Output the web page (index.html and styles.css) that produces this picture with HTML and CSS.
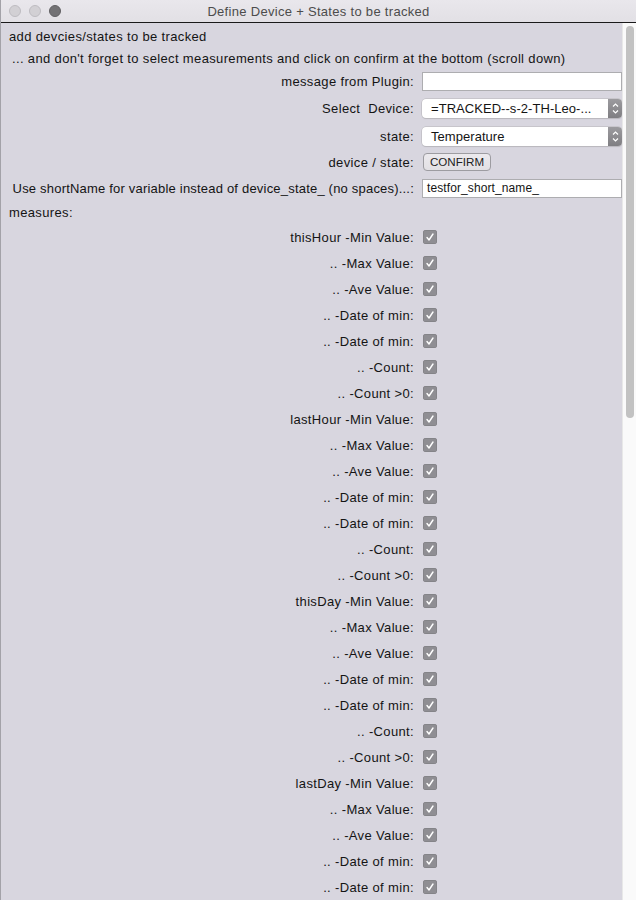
FILE: index.html
```html
<!DOCTYPE html>
<html>
<head>
<meta charset="utf-8">
<title>Define Device + States to be tracked</title>
<link rel="stylesheet" href="styles.css">
</head>
<body>
<div class="window">
  <div class="titlebar">
    <div class="lights">
      <span class="light"></span>
      <span class="light"></span>
      <span class="light dark"></span>
    </div>
    <div class="title">Define Device + States to be tracked</div>
  </div>
  <div class="body">
    <div class="content">
      <div class="text-row first">add devcies/states to be tracked</div>
      <div class="text-row indent">... and don't forget to select measurements and click on confirm at the bottom (scroll down)</div>

      <div class="field h-msg">
        <span class="label">message from Plugin:</span>
        <div class="textbox"></div>
      </div>
      <div class="field h-dev">
        <span class="label">Select&nbsp; Device:</span>
        <div class="popup"><span class="popup-text">=TRACKED--s-2-TH-Leo-...</span><span class="stepper"><svg width="13" height="19" viewBox="0 0 13 19"><path d="M4 7.5 L6.5 5 L9 7.5" fill="none" stroke="#fff" stroke-width="1.2"/><path d="M4 11.5 L6.5 14 L9 11.5" fill="none" stroke="#fff" stroke-width="1.2"/></svg></span></div>
      </div>
      <div class="field h-row">
        <span class="label">state:</span>
        <div class="popup"><span class="popup-text">Temperature</span><span class="stepper"><svg width="13" height="19" viewBox="0 0 13 19"><path d="M4 7.5 L6.5 5 L9 7.5" fill="none" stroke="#fff" stroke-width="1.2"/><path d="M4 11.5 L6.5 14 L9 11.5" fill="none" stroke="#fff" stroke-width="1.2"/></svg></span></div>
      </div>
      <div class="field h-row">
        <span class="label">device / state:</span>
        <div><span class="button">CONFIRM</span></div>
      </div>
      <div class="field h-row">
        <span class="label tight">Use shortName for variable instead of device_state_ (no spaces)...:</span>
        <div class="textbox">testfor_short_name_</div>
      </div>
      <div class="text-row measures">measures:</div>

      <div class="field h-check"><span class="label">thisHour -Min Value:</span><span class="check"><svg width="14" height="14" viewBox="0 0 14 14"><path d="M4 7.5 L6 10 L10 4" fill="none" stroke="#fff" stroke-width="1.4" stroke-linecap="round" stroke-linejoin="round"/></svg></span></div>
      <div class="field h-check"><span class="label">.. -Max Value:</span><span class="check"><svg width="14" height="14" viewBox="0 0 14 14"><path d="M4 7.5 L6 10 L10 4" fill="none" stroke="#fff" stroke-width="1.4" stroke-linecap="round" stroke-linejoin="round"/></svg></span></div>
      <div class="field h-check"><span class="label">.. -Ave Value:</span><span class="check"><svg width="14" height="14" viewBox="0 0 14 14"><path d="M4 7.5 L6 10 L10 4" fill="none" stroke="#fff" stroke-width="1.4" stroke-linecap="round" stroke-linejoin="round"/></svg></span></div>
      <div class="field h-check"><span class="label">.. -Date of min:</span><span class="check"><svg width="14" height="14" viewBox="0 0 14 14"><path d="M4 7.5 L6 10 L10 4" fill="none" stroke="#fff" stroke-width="1.4" stroke-linecap="round" stroke-linejoin="round"/></svg></span></div>
      <div class="field h-check"><span class="label">.. -Date of min:</span><span class="check"><svg width="14" height="14" viewBox="0 0 14 14"><path d="M4 7.5 L6 10 L10 4" fill="none" stroke="#fff" stroke-width="1.4" stroke-linecap="round" stroke-linejoin="round"/></svg></span></div>
      <div class="field h-check"><span class="label">.. -Count:</span><span class="check"><svg width="14" height="14" viewBox="0 0 14 14"><path d="M4 7.5 L6 10 L10 4" fill="none" stroke="#fff" stroke-width="1.4" stroke-linecap="round" stroke-linejoin="round"/></svg></span></div>
      <div class="field h-check"><span class="label">.. -Count &gt;0:</span><span class="check"><svg width="14" height="14" viewBox="0 0 14 14"><path d="M4 7.5 L6 10 L10 4" fill="none" stroke="#fff" stroke-width="1.4" stroke-linecap="round" stroke-linejoin="round"/></svg></span></div>

      <div class="field h-check"><span class="label">lastHour -Min Value:</span><span class="check"><svg width="14" height="14" viewBox="0 0 14 14"><path d="M4 7.5 L6 10 L10 4" fill="none" stroke="#fff" stroke-width="1.4" stroke-linecap="round" stroke-linejoin="round"/></svg></span></div>
      <div class="field h-check"><span class="label">.. -Max Value:</span><span class="check"><svg width="14" height="14" viewBox="0 0 14 14"><path d="M4 7.5 L6 10 L10 4" fill="none" stroke="#fff" stroke-width="1.4" stroke-linecap="round" stroke-linejoin="round"/></svg></span></div>
      <div class="field h-check"><span class="label">.. -Ave Value:</span><span class="check"><svg width="14" height="14" viewBox="0 0 14 14"><path d="M4 7.5 L6 10 L10 4" fill="none" stroke="#fff" stroke-width="1.4" stroke-linecap="round" stroke-linejoin="round"/></svg></span></div>
      <div class="field h-check"><span class="label">.. -Date of min:</span><span class="check"><svg width="14" height="14" viewBox="0 0 14 14"><path d="M4 7.5 L6 10 L10 4" fill="none" stroke="#fff" stroke-width="1.4" stroke-linecap="round" stroke-linejoin="round"/></svg></span></div>
      <div class="field h-check"><span class="label">.. -Date of min:</span><span class="check"><svg width="14" height="14" viewBox="0 0 14 14"><path d="M4 7.5 L6 10 L10 4" fill="none" stroke="#fff" stroke-width="1.4" stroke-linecap="round" stroke-linejoin="round"/></svg></span></div>
      <div class="field h-check"><span class="label">.. -Count:</span><span class="check"><svg width="14" height="14" viewBox="0 0 14 14"><path d="M4 7.5 L6 10 L10 4" fill="none" stroke="#fff" stroke-width="1.4" stroke-linecap="round" stroke-linejoin="round"/></svg></span></div>
      <div class="field h-check"><span class="label">.. -Count &gt;0:</span><span class="check"><svg width="14" height="14" viewBox="0 0 14 14"><path d="M4 7.5 L6 10 L10 4" fill="none" stroke="#fff" stroke-width="1.4" stroke-linecap="round" stroke-linejoin="round"/></svg></span></div>

      <div class="field h-check"><span class="label">thisDay -Min Value:</span><span class="check"><svg width="14" height="14" viewBox="0 0 14 14"><path d="M4 7.5 L6 10 L10 4" fill="none" stroke="#fff" stroke-width="1.4" stroke-linecap="round" stroke-linejoin="round"/></svg></span></div>
      <div class="field h-check"><span class="label">.. -Max Value:</span><span class="check"><svg width="14" height="14" viewBox="0 0 14 14"><path d="M4 7.5 L6 10 L10 4" fill="none" stroke="#fff" stroke-width="1.4" stroke-linecap="round" stroke-linejoin="round"/></svg></span></div>
      <div class="field h-check"><span class="label">.. -Ave Value:</span><span class="check"><svg width="14" height="14" viewBox="0 0 14 14"><path d="M4 7.5 L6 10 L10 4" fill="none" stroke="#fff" stroke-width="1.4" stroke-linecap="round" stroke-linejoin="round"/></svg></span></div>
      <div class="field h-check"><span class="label">.. -Date of min:</span><span class="check"><svg width="14" height="14" viewBox="0 0 14 14"><path d="M4 7.5 L6 10 L10 4" fill="none" stroke="#fff" stroke-width="1.4" stroke-linecap="round" stroke-linejoin="round"/></svg></span></div>
      <div class="field h-check"><span class="label">.. -Date of min:</span><span class="check"><svg width="14" height="14" viewBox="0 0 14 14"><path d="M4 7.5 L6 10 L10 4" fill="none" stroke="#fff" stroke-width="1.4" stroke-linecap="round" stroke-linejoin="round"/></svg></span></div>
      <div class="field h-check"><span class="label">.. -Count:</span><span class="check"><svg width="14" height="14" viewBox="0 0 14 14"><path d="M4 7.5 L6 10 L10 4" fill="none" stroke="#fff" stroke-width="1.4" stroke-linecap="round" stroke-linejoin="round"/></svg></span></div>
      <div class="field h-check"><span class="label">.. -Count &gt;0:</span><span class="check"><svg width="14" height="14" viewBox="0 0 14 14"><path d="M4 7.5 L6 10 L10 4" fill="none" stroke="#fff" stroke-width="1.4" stroke-linecap="round" stroke-linejoin="round"/></svg></span></div>

      <div class="field h-check"><span class="label">lastDay -Min Value:</span><span class="check"><svg width="14" height="14" viewBox="0 0 14 14"><path d="M4 7.5 L6 10 L10 4" fill="none" stroke="#fff" stroke-width="1.4" stroke-linecap="round" stroke-linejoin="round"/></svg></span></div>
      <div class="field h-check"><span class="label">.. -Max Value:</span><span class="check"><svg width="14" height="14" viewBox="0 0 14 14"><path d="M4 7.5 L6 10 L10 4" fill="none" stroke="#fff" stroke-width="1.4" stroke-linecap="round" stroke-linejoin="round"/></svg></span></div>
      <div class="field h-check"><span class="label">.. -Ave Value:</span><span class="check"><svg width="14" height="14" viewBox="0 0 14 14"><path d="M4 7.5 L6 10 L10 4" fill="none" stroke="#fff" stroke-width="1.4" stroke-linecap="round" stroke-linejoin="round"/></svg></span></div>
      <div class="field h-check"><span class="label">.. -Date of min:</span><span class="check"><svg width="14" height="14" viewBox="0 0 14 14"><path d="M4 7.5 L6 10 L10 4" fill="none" stroke="#fff" stroke-width="1.4" stroke-linecap="round" stroke-linejoin="round"/></svg></span></div>
      <div class="field h-check"><span class="label">.. -Date of min:</span><span class="check"><svg width="14" height="14" viewBox="0 0 14 14"><path d="M4 7.5 L6 10 L10 4" fill="none" stroke="#fff" stroke-width="1.4" stroke-linecap="round" stroke-linejoin="round"/></svg></span></div>
    </div>
    <div class="scrollbar"><div class="thumb"></div></div>
  </div>
</div>
</body>
</html>
```
FILE: styles.css
```css
* { box-sizing: border-box; }
html, body { margin: 0; padding: 0; }
body {
  font-family: "Liberation Sans", Arial, sans-serif;
  font-size: 13px;
  letter-spacing: 0.35px;
  color: #141414;
  background: #d8d6df;
}
.window {
  width: 636px;
  height: 900px;
  overflow: hidden;
  display: flex;
  flex-direction: column;
  border-left: 1px solid #a3a2a8;
  background: #d8d6df;
}
.titlebar {
  height: 23px;
  flex: none;
  display: flex;
  align-items: center;
  background: linear-gradient(#e9e7ec, #e2e0e5);
  border-bottom: 1px solid #1a1a1a;
  position: relative;
}
.lights {
  display: flex;
  gap: 8px;
  padding-left: 8px;
  margin-top: -1px;
}
.light {
  width: 12px;
  height: 12px;
  border-radius: 50%;
  background: #d2d0d4;
  border: 1px solid #bebcc1;
}
.light.dark {
  background: #737275;
  border-color: #616063;
}
.title {
  position: absolute;
  left: 0;
  right: 0;
  top: 4px;
  text-align: center;
  color: #4c4c4c;
  font-size: 13px;
  letter-spacing: 0.3px;
  pointer-events: none;
}
.body {
  flex: 1;
  display: flex;
  min-height: 0;
}
.content {
  width: 621px;
  flex: none;
  display: flex;
  flex-direction: column;
  padding-top: 3px;
}
.text-row {
  height: 22px;
  line-height: 22px;
  padding-left: 8px;
  white-space: nowrap;
}
.text-row.indent { padding-left: 11px; }
.text-row.measures { height: 23px; line-height: 23px; }
.field {
  display: grid;
  grid-template-columns: 413px 200px;
  column-gap: 8px;
  align-items: center;
}
.h-msg { height: 23px; }
.h-dev { height: 30px; }
.h-row { height: 26px; }
.h-check { height: 26px; }
.label {
  text-align: right;
  white-space: nowrap;
}
.label.tight { letter-spacing: 0.2px; }
.textbox {
  height: 19px;
  background: #fff;
  border: 1px solid #adadb0;
  padding-left: 4px;
  line-height: 17px;
  font-size: 12px;
  letter-spacing: 0.1px;
  color: #141414;
}
.popup {
  height: 19px;
  display: flex;
  background: #fff;
  border-radius: 4px;
  box-shadow: 0 0 0 0.5px #b5b4b8, 0 1px 1px rgba(0,0,0,0.12);
  overflow: hidden;
  letter-spacing: 0.05px;
}
.popup-text {
  flex: 1;
  padding-left: 9px;
  line-height: 19px;
  white-space: nowrap;
  overflow: hidden;
}
.stepper {
  width: 14px;
  flex: none;
  background: linear-gradient(#9c9b9f, #7f7e82);
  display: flex;
  align-items: center;
  justify-content: center;
}
.stepper svg { display: block; }
.button {
  display: inline-block;
  width: 68px;
  height: 18px;
  margin-left: 1px;
  line-height: 16px;
  text-align: center;
  font-size: 11.6px;
  letter-spacing: 0;
  background: linear-gradient(#eceaee, #e2e0e4);
  border: 1px solid #9d9ca1;
  border-radius: 4px;
  color: #222;
}
.check {
  width: 14px;
  height: 14px;
  margin-left: 1px;
  border-radius: 3px;
  background: #8f8e93;
  box-shadow: inset 0 0 0 0.5px #7b7a7f;
  display: flex;
}
.check svg { display: block; }
.scrollbar {
  width: 14px;
  flex: none;
  background: #fafafa;
  border-left: 1px solid #e8e8e8;
  padding: 3px 2px 0 3px;
}
.thumb {
  width: 8px;
  height: 392px;
  border-radius: 4px;
  background: #c2c2c2;
}
```
